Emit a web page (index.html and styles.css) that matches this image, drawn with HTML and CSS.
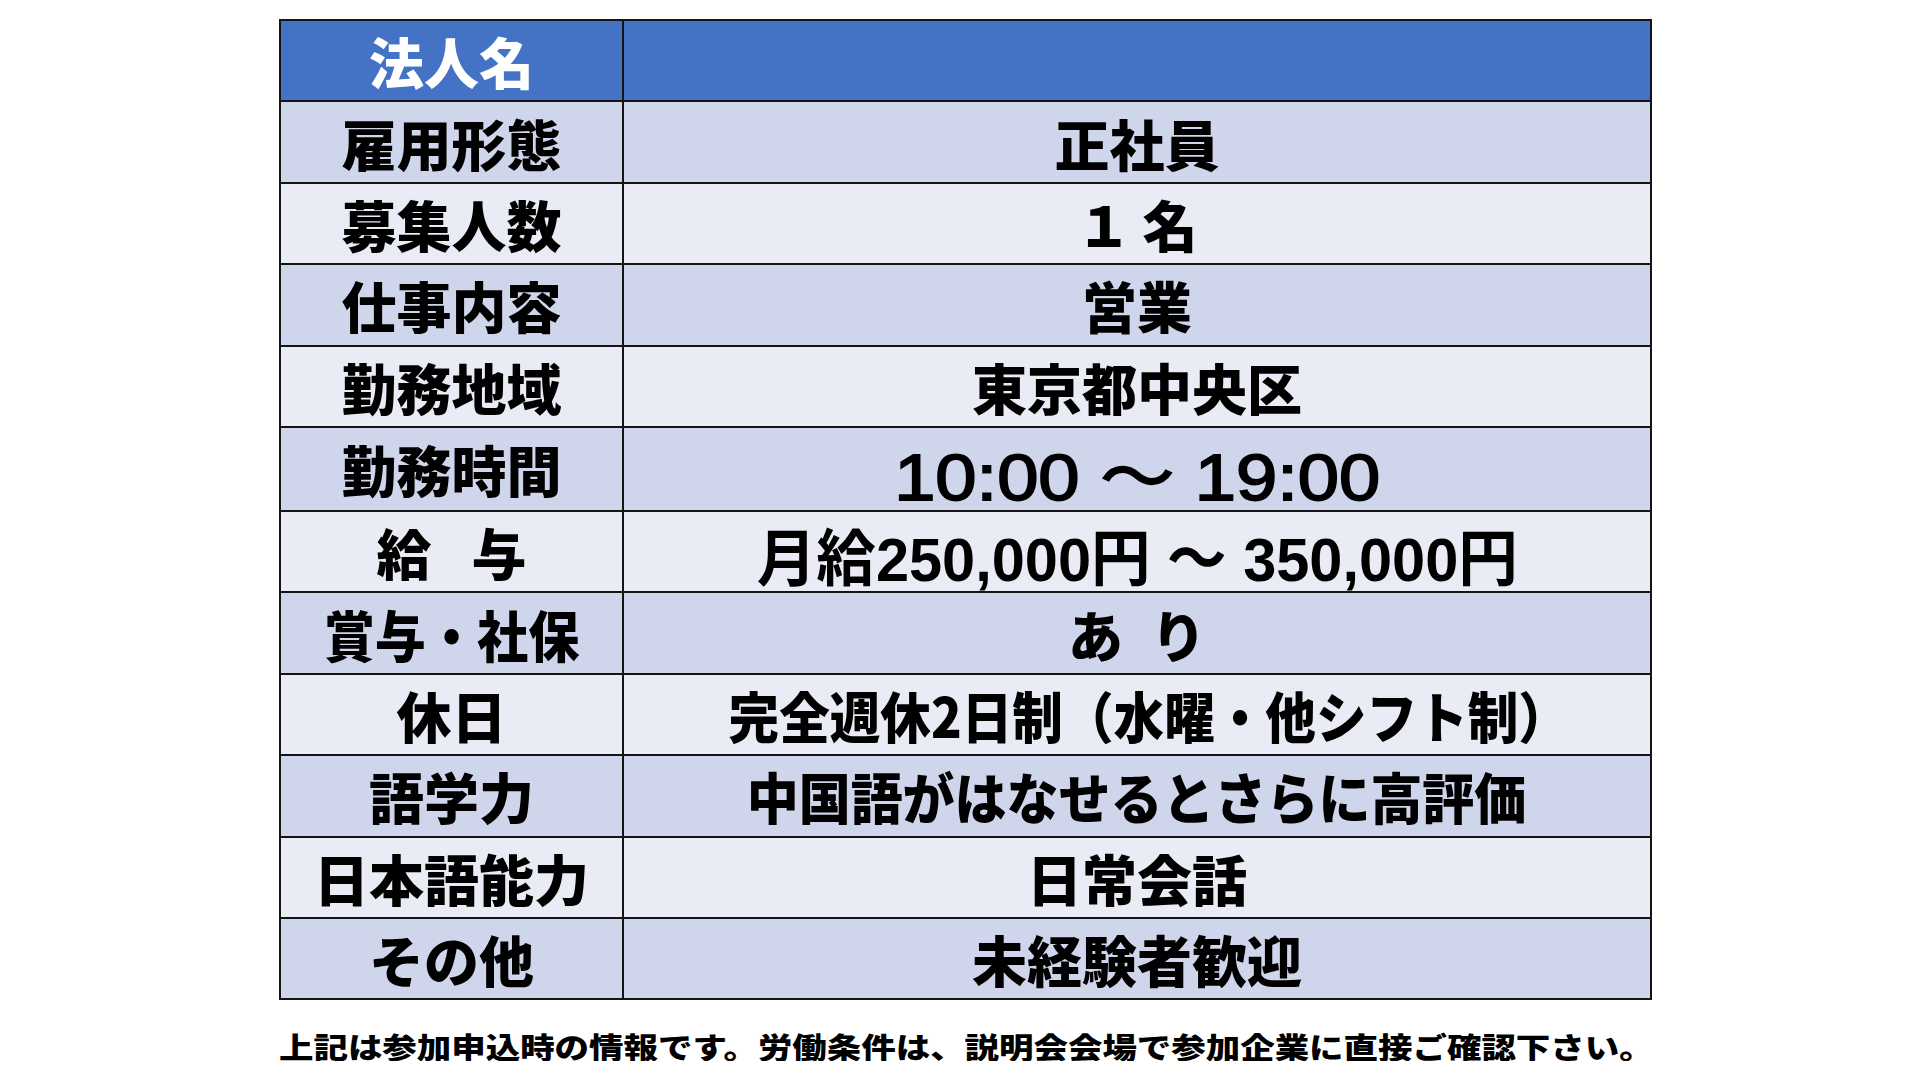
FILE: index.html
```html
<!DOCTYPE html>
<html lang="ja">
<head>
<meta charset="utf-8">
<title>募集要項</title>
<link rel="stylesheet" href="styles.css">
</head>
<body>
<main class="page">
  <table class="info">
    <colgroup><col class="c-label"><col class="c-value"></colgroup>
    <tr class="head"><th class="label">法人名</th><td class="value"></td></tr>
    <tr class="odd"><th class="label">雇用形態</th><td class="value">正社員</td></tr>
    <tr class="even"><th class="label">募集人数</th><td class="value">１<span class="gap-s"></span>名</td></tr>
    <tr class="odd"><th class="label">仕事内容</th><td class="value">営業</td></tr>
    <tr class="even"><th class="label">勤務地域</th><td class="value">東京都中央区</td></tr>
    <tr class="odd"><th class="label">勤務時間</th><td class="value num-cell"><span class="time">10:00 ～ 19:00</span></td></tr>
    <tr class="even"><th class="label">給<span class="gap-l"></span>与</th><td class="value num-cell"><span class="salary">月給250,000円 ～ 350,000円</span></td></tr>
    <tr class="odd"><th class="label"><span class="squeeze-94">賞与・社保</span></th><td class="value">あ<span class="gap-m"></span>り</td></tr>
    <tr class="even"><th class="label">休日</th><td class="value"><span class="squeeze-92 nudge">完全週休2日制（水曜・他シフト制）</span></td></tr>
    <tr class="odd"><th class="label">語学力</th><td class="value"><span class="squeeze-96">中国語がはなせるとさらに高評価</span></td></tr>
    <tr class="even"><th class="label">日本語能力</th><td class="value">日常会話</td></tr>
    <tr class="odd"><th class="label">その他</th><td class="value">未経験者歓迎</td></tr>
  </table>
  <p class="note"><span class="note-text">上記は参加申込時の情報です。労働条件は、説明会会場で参加企業に直接ご確認下さい。</span></p>
</main>
</body>
</html>
```

FILE: styles.css
```css
html, body {
  margin: 0;
  padding: 0;
  background: #ffffff;
}

body {
  font-family: "Noto Sans CJK JP", "Noto Sans", sans-serif;
  color: #000000;
}

.page {
  padding: 19px 0 0 279px;
}

.info {
  border-collapse: collapse;
  table-layout: fixed;
  width: 1373px;
}

.c-label {
  width: 343px;
}

.info tr {
  height: 81.4px;
}

.info th,
.info td {
  border: 2px solid #141414;
  padding: 0;
  text-align: center;
  vertical-align: middle;
  font-weight: 900;
  line-height: 1;
  white-space: nowrap;
}

.label {
  font-size: 55px;
  padding-top: 16px;
}

.value {
  font-size: 55px;
  padding-top: 28px;
}

.value.num-cell {
  padding-top: 17px;
}

.head {
  background: #4472c4;
}

.head .label {
  color: #ffffff;
}

.odd {
  background: #cfd5ea;
}

.even {
  background: #e9ebf5;
}

.gap-s {
  display: inline-block;
  width: 11px;
}

.gap-m {
  display: inline-block;
  width: 28px;
}

.gap-l {
  display: inline-block;
  width: 40px;
}

.time {
  display: inline-block;
  font-family: "Liberation Sans", "Noto Sans CJK JP", sans-serif;
  font-weight: 400;
  font-size: 65px;
  -webkit-text-stroke: 1.8px #000000;
  transform: scaleX(1.14);
}

.salary {
  display: inline-block;
  font-family: "Liberation Sans", "Noto Sans CJK JP", sans-serif;
  font-weight: 700;
  font-size: 62px;
  transform: scaleX(0.96);
}

.squeeze-92,
.squeeze-94,
.squeeze-96 {
  display: inline-block;
}

.squeeze-92 { transform: scaleX(0.92); }
.squeeze-94 { transform: scaleX(0.93); }
.squeeze-96 { transform: scaleX(0.945); }

.nudge {
  margin-left: 24px;
}

.note {
  margin: 32px 0 0 0;
  font-size: 29px;
  font-weight: 900;
  line-height: 1;
  white-space: nowrap;
}

.note-text {
  display: inline-block;
  transform: scaleX(1.188);
  transform-origin: left center;
}
```
